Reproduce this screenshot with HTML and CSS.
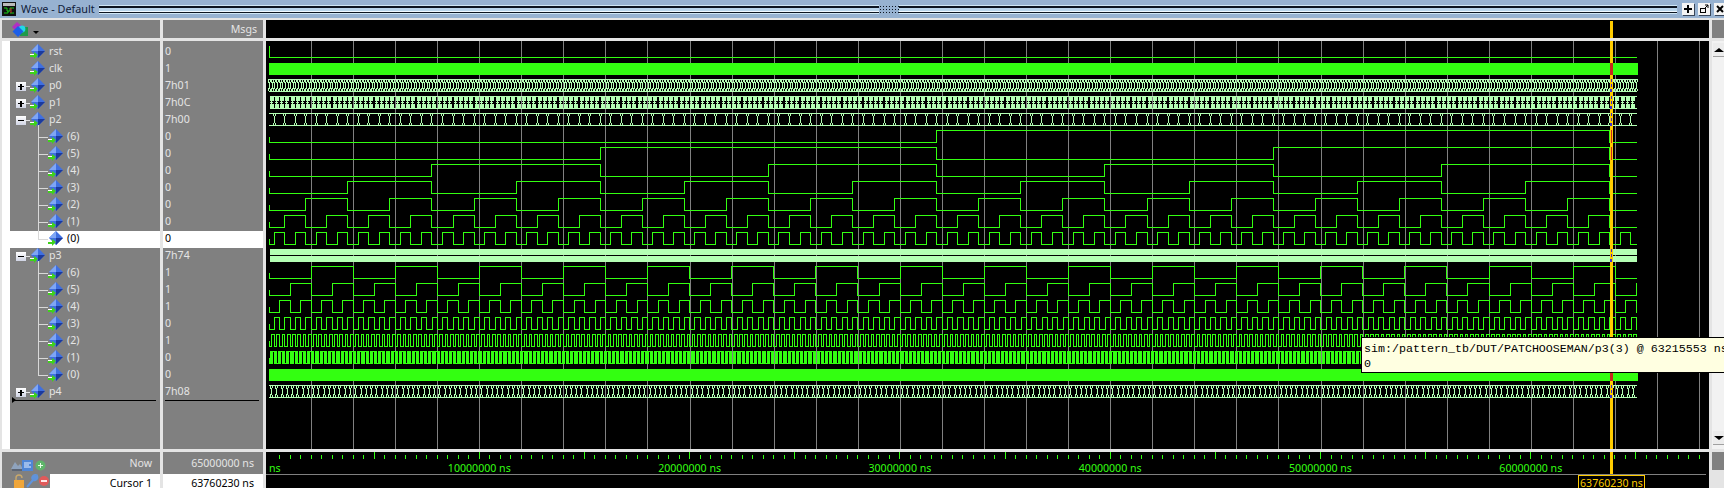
FILE: index.html
```html
<!DOCTYPE html>
<html>
<head>
    <title>Wave - Default</title>
    <link rel="stylesheet" href="styles.css">
</head>
<body>
    <svg class="defs" width="0" height="0">
        <symbol id="sig" viewBox="0 0 15 15">
            <polygon points="8,0 15,7 8,14 1,7" fill="#3f6fe0"/>
            <polygon points="8,0 1,7 8,7" fill="#7fa6f5"/>
            <polygon points="15,7 8,14 8,7" fill="#1c3a9c"/>
            <polygon points="0,10 4,10 4,8 8,11 4,15 4,13 0,13" fill="#3fd21a"/>
            <rect x="0" y="10" width="4" height="1" fill="#fff"/>
        </symbol>
    </svg>

    <div class="titlebar">
        <svg class="app-icon" width="14" height="14" viewBox="0 0 14 14">
            <rect width="14" height="14" fill="#111"/>
            <rect x="1" y="1" width="12" height="3" fill="#bbb"/>
            <path d="M2 6h3v3h3V6h4M2 11h4V9M8 11h4" stroke="#18d018" fill="none"/>
            <path d="M9 6v5" stroke="#d03030" fill="none"/>
        </svg>
        <span class="title-text">Wave - Default</span>
        <div class="grip"><div class="grip-knob"></div></div>
        <div class="title-btns">
            <div class="title-btn">
                <svg width="12" height="12" viewBox="0 0 12 12"><path d="M6 2v8M2 6h8" stroke="#000" stroke-width="2"/></svg>
            </div>
            <div class="title-btn">
                <svg width="12" height="12" viewBox="0 0 12 12"><rect x="2.5" y="5.5" width="5" height="4" fill="none" stroke="#000"/><path d="M6 6l4-4M7 2h3v3" stroke="#000" fill="none"/></svg>
            </div>
            <div class="title-btn">
                <svg width="12" height="12" viewBox="0 0 12 12"><path d="M3 3l6 6M9 3l-6 6" stroke="#000" stroke-width="2"/></svg>
            </div>
        </div>
    </div>

    <div class="window">
        <!-- header row -->
        <div class="head head-names">
            <svg class="group-icon" width="17" height="16" viewBox="0 0 17 16">
                <polygon points="5,0 11,5 5,10 0,5" fill="#b22fc0"/>
                <rect x="8" y="5" width="8" height="9" fill="#1f9a4a"/>
                <circle cx="10" cy="7" r="3.4" fill="#22d5e8"/>
                <polygon points="6,4 11.5,9.5 6,15 0.5,9.5" fill="#1d5fe8"/>
            </svg>
            <span class="drop-arrow"></span>
        </div>
        <div class="head head-msgs">Msgs</div>
        <div class="head head-wave"><div class="cursor-head"></div></div>
        <div class="head"></div>

        <!-- signal names -->
        <div class="names">
            <div class="names-in">
                <div class="row"><span class="slot"></span><svg class="ico"><use href="#sig"/></svg><span class="name">rst</span></div>
                <div class="row"><span class="slot"></span><svg class="ico"><use href="#sig"/></svg><span class="name">clk</span></div>
                <div class="row"><span class="slot"><span class="toggle plus"></span></span><svg class="ico"><use href="#sig"/></svg><span class="name">p0</span></div>
                <div class="row"><span class="slot"><span class="toggle plus"></span></span><svg class="ico"><use href="#sig"/></svg><span class="name">p1</span></div>
                <div class="row open"><span class="slot"><span class="toggle"></span></span><svg class="ico"><use href="#sig"/></svg><span class="name">p2</span></div>
                <div class="row"><span class="branch"></span><svg class="ico"><use href="#sig"/></svg><span class="name">(6)</span></div>
                <div class="row"><span class="branch"></span><svg class="ico"><use href="#sig"/></svg><span class="name">(5)</span></div>
                <div class="row"><span class="branch"></span><svg class="ico"><use href="#sig"/></svg><span class="name">(4)</span></div>
                <div class="row"><span class="branch"></span><svg class="ico"><use href="#sig"/></svg><span class="name">(3)</span></div>
                <div class="row"><span class="branch"></span><svg class="ico"><use href="#sig"/></svg><span class="name">(2)</span></div>
                <div class="row"><span class="branch"></span><svg class="ico"><use href="#sig"/></svg><span class="name">(1)</span></div>
                <div class="row selected"><span class="branch last"></span><svg class="ico"><use href="#sig"/></svg><span class="name">(0)</span></div>
                <div class="row open"><span class="slot"><span class="toggle"></span></span><svg class="ico"><use href="#sig"/></svg><span class="name">p3</span></div>
                <div class="row"><span class="branch"></span><svg class="ico"><use href="#sig"/></svg><span class="name">(6)</span></div>
                <div class="row"><span class="branch"></span><svg class="ico"><use href="#sig"/></svg><span class="name">(5)</span></div>
                <div class="row"><span class="branch"></span><svg class="ico"><use href="#sig"/></svg><span class="name">(4)</span></div>
                <div class="row"><span class="branch"></span><svg class="ico"><use href="#sig"/></svg><span class="name">(3)</span></div>
                <div class="row"><span class="branch"></span><svg class="ico"><use href="#sig"/></svg><span class="name">(2)</span></div>
                <div class="row"><span class="branch"></span><svg class="ico"><use href="#sig"/></svg><span class="name">(1)</span></div>
                <div class="row"><span class="branch last"></span><svg class="ico"><use href="#sig"/></svg><span class="name">(0)</span></div>
                <div class="row"><span class="slot"><span class="toggle plus"></span></span><svg class="ico"><use href="#sig"/></svg><span class="name">p4</span></div>
                <div class="endline names-end"></div>
            </div>
        </div>

        <!-- signal values -->
        <div class="values">
            <div class="val">0</div>
            <div class="val">1</div>
            <div class="val">7h01</div>
            <div class="val">7h0C</div>
            <div class="val">7h00</div>
            <div class="val">0</div>
            <div class="val">0</div>
            <div class="val">0</div>
            <div class="val">0</div>
            <div class="val">0</div>
            <div class="val">0</div>
            <div class="val selected">0</div>
            <div class="val">7h74</div>
            <div class="val">1</div>
            <div class="val">1</div>
            <div class="val">1</div>
            <div class="val">0</div>
            <div class="val">1</div>
            <div class="val">0</div>
            <div class="val">0</div>
            <div class="val">7h08</div>
            <div class="endline values-end"></div>
        </div>

        <!-- drawn by wave.js -->
        <svg id="wave" class="wave" width="1443" height="408" viewBox="266 41 1443 408"></svg>

        <div class="scrollbar">
            <div class="scroll-btn"><span class="arrow-up"></span></div>
            <div class="scroll-btn"><span class="arrow-down"></span></div>
        </div>

        <!-- footer -->
        <div class="foot">
            <div class="foot-row">
                <span class="foot-icons">
                    <svg width="36" height="13" viewBox="0 0 36 13">
                        <path d="M0 10l4-7 3 4 2-2 3 5z" fill="#8fa3bd"/>
                        <path d="M1 11h10" stroke="#3b4a66"/>
                        <rect x="11" y="1" width="11" height="11" fill="#4f86d6"/>
                        <path d="M13 4h7M13 6h5M13 8h7" stroke="#e8f0ff"/>
                        <circle cx="29.5" cy="6.5" r="5" fill="#5fb56a"/>
                        <path d="M27 6.5h5M29.5 4v5" stroke="#e8ffe8"/>
                    </svg>
                </span>
                <span class="foot-label">Now</span>
            </div>
            <div class="foot-row cursor-row">
                <span class="foot-icons tools">
                    <svg width="37" height="14" viewBox="0 0 37 14">
                        <path d="M3 6V4a3 3 0 0 1 6 0" fill="none" stroke="#c9a86a" stroke-width="1.4"/>
                        <rect x="1" y="6" width="10" height="8" fill="#f0a63a"/>
                        <path d="M14 13l6-7M20 6a3 3 0 0 1 2-5l-1 2 2 1 1-2a3 3 0 0 1-4 4" stroke="#5f93dc" stroke-width="2" fill="#5f93dc"/>
                        <circle cx="31" cy="7" r="5" fill="#e05a5a"/>
                        <path d="M28 7h6" stroke="#ffe8e8" stroke-width="2"/>
                    </svg>
                </span>
                <span class="foot-cell">Cursor 1</span>
            </div>
        </div>
        <div class="foot">
            <div class="foot-row"><span class="foot-time">65000000 ns</span></div>
            <div class="foot-row cursor-row"><span class="foot-cell foot-time">63760230 ns</span></div>
        </div>
        <svg id="scale" class="scale" width="1443" height="36" viewBox="266 452 1443 36"></svg>
        <div class="head"></div>
    </div>

    <div class="tooltip">
        <div>sim:/pattern_tb/DUT/PATCHOOSEMAN/p3(3) @ 63215553 ns</div>
        <div>0</div>
    </div>

    <script src="wave.js"></script>
</body>
</html>
```

FILE: styles.css
```css
body {
    margin: 0;
    width: 1724px;
    height: 488px;
    overflow: hidden;
    position: relative;
    background-color: #e4e4e4;
    font-family: "Noto Sans", sans-serif;
    font-size: 10.6px;
}
.defs {
    position: absolute;
}

/* title bar */
.titlebar {
    display: flex;
    align-items: flex-start;
    height: 18px;
    background-color: #97b2d1;
}
.app-icon {
    flex: none;
    margin: 2px 0 0 2px;
}
.title-text {
    flex: none;
    margin-left: 5px;
    width: 78px;
    line-height: 17px;
    font-size: 10.8px;
    white-space: nowrap;
    color: #10203a;
}
.grip {
    flex: none;
    position: relative;
    width: 1578px;
    height: 9px;
    margin-top: 5px;
    background: linear-gradient(#cfe6f5 0 1px, #0c1420 1px 3px, #b9d4ea 3px 6px, #f0f8ff 6px 7px, #0c1420 7px 8px, #cfe6f5 8px 9px);
}
.grip-knob {
    position: absolute;
    left: 780px;
    top: 0;
    width: 20px;
    height: 9px;
    background-color: #97b2d1;
    background-image: radial-gradient(circle, #0c1420 0 1px, transparent 1px);
    background-size: 3px 3px;
}
.title-btns {
    display: flex;
    gap: 4px;
    margin: 3px 0 0 5px;
}
.title-btn {
    flex: none;
    width: 12px;
    height: 12px;
    background-color: #f4f4f4;
    box-shadow: 1px 1px 0 #3a4658;
}

/* panes */
.window {
    display: grid;
    grid-template-columns: 158px 100px 1443px 12px;
    grid-template-rows: 18px 408px 36px;
    gap: 3px;
    padding: 2px 0 0 2px;
}
.head {
    height: 18px;
    background-color: #808080;
}
.head-names {
    display: flex;
    align-items: flex-start;
}
.group-icon {
    margin: 2px 0 0 10px;
}
.drop-arrow {
    margin: 11px 0 0 4px;
    border-left: 3px solid transparent;
    border-right: 3px solid transparent;
    border-top: 3px solid #000;
}
.head-msgs {
    padding-right: 6px;
    text-align: right;
    line-height: 18px;
    color: #e4e4e4;
}
.head-wave {
    position: relative;
    background-color: #000;
}
.cursor-head {
    position: absolute;
    left: 1344px;
    top: 1px;
    width: 3px;
    height: 17px;
    background-color: #ffcc00;
}

/* signal names */
.names {
    padding-left: 8px;
    background-color: #fff;
}
.names-in {
    height: 405px;
    padding-top: 3px;
    background-color: #808080;
}
.row {
    position: relative;
    display: flex;
    align-items: flex-start;
    height: 17px;
    color: #e4e4e4;
    line-height: 15px;
}
.selected {
    background-color: #fff;
    color: #000;
}
.slot {
    flex: none;
    width: 20px;
    height: 15px;
}
.ico {
    flex: none;
    width: 15px;
    height: 15px;
}
.name {
    margin-left: 4px;
}
.toggle {
    display: block;
    position: relative;
    width: 10px;
    height: 9px;
    margin: 4px 0 0 6px;
    background:
        linear-gradient(#000, #000) center / 6px 1px no-repeat,
        linear-gradient(#ffffff, #d0d4e4);
}
.toggle.plus {
    background:
        linear-gradient(#000, #000) center / 6px 1px no-repeat,
        linear-gradient(#000, #000) center / 2px 6px no-repeat,
        linear-gradient(#ffffff, #d0d4e4);
}
.toggle::after {
    content: "";
    position: absolute;
    left: 10px;
    top: 4px;
    width: 4px;
    height: 1px;
    background-color: #e4e4e4;
}
.open::after {
    content: "";
    position: absolute;
    left: 28px;
    top: 13px;
    width: 1px;
    height: 4px;
    background-color: #d8d8d8;
}
.branch {
    flex: none;
    box-sizing: border-box;
    width: 10px;
    height: 17px;
    margin-left: 28px;
    border-left: 1px solid #d8d8d8;
    background: linear-gradient(#d8d8d8, #d8d8d8) 0 8px / 100% 1px no-repeat;
}
.branch.last {
    height: 9px;
}
.endline {
    height: 1px;
    margin-top: -1px;
    background-color: #000;
}
.names-end {
    position: relative;
    margin: -1px 4px 0;
}
.names-end::before {
    content: "";
    position: absolute;
    left: -2px;
    top: -3px;
    border-left: 4px solid #000;
    border-top: 3px solid transparent;
    border-bottom: 3px solid transparent;
}

/* signal values */
.values {
    padding-top: 3px;
    background-color: #808080;
}
.val {
    height: 17px;
    padding-left: 2px;
    line-height: 15px;
    color: #e4e4e4;
}
.val.selected {
    color: #000;
}
.values-end {
    margin: -1px 4px 0 2px;
}

/* waveform */
.wave, .scale {
    display: block;
    background-color: #000;
}
.scale text {
    font-family: "Noto Sans", sans-serif;
    font-size: 10.6px;
    fill: #33ff11;
}
.scale .cursor-text {
    fill: #ffcc00;
}

/* scrollbar */
.scrollbar {
    display: flex;
    flex-direction: column;
    justify-content: space-between;
    padding: 2px 0 4px 1px;
    background-color: #f2f2f2;
}
.scroll-btn {
    display: flex;
    align-items: center;
    justify-content: center;
    height: 13px;
    background-color: #ececec;
    border-bottom: 1px solid #a0a0a0;
}
.arrow-up {
    border-left: 5px solid transparent;
    border-right: 5px solid transparent;
    border-bottom: 4px solid #000;
}
.arrow-down {
    border-left: 5px solid transparent;
    border-right: 5px solid transparent;
    border-top: 4px solid #000;
}

/* footer */
.foot {
    height: 36px;
    background-color: #808080;
}
.foot-row {
    display: flex;
    height: 22px;
    line-height: 22px;
    color: #e4e4e4;
}
.foot-icons {
    flex: none;
    width: 48px;
    padding: 5px 0 0 9px;
    box-sizing: border-box;
}
.foot-label {
    flex: 1;
    padding-right: 8px;
    text-align: right;
}
.cursor-row {
    height: 14px;
    line-height: 10px;
    color: #000;
}
.tools {
    padding: 0 0 0 11px;
}
.foot-cell {
    flex: 1;
    padding: 4px 8px 0 0;
    text-align: right;
    background-color: #fff;
}
.foot-time {
    flex: 1;
    padding-right: 9px;
    text-align: right;
}

/* tooltip over the wave pane */
.tooltip {
    position: absolute;
    left: 1361px;
    top: 337px;
    right: 0;
    box-sizing: border-box;
    height: 36px;
    padding: 4px 0 0 2px;
    overflow: hidden;
    background-color: #ffffe1;
    border: 1px solid #000;
    border-right: none;
    font-family: "Liberation Mono", monospace;
    font-size: 11.67px;
    line-height: 15px;
    white-space: nowrap;
    color: #000;
}
```

FILE: wave.js
```js
var NS = "http://www.w3.org/2000/svg";
var GREEN = "#33ff11";
var PALE = "#b4ffb4";
var X0 = 269;       // time 0
var X1 = 1637;      // end of simulation
var UNIT = 10.515;  // 500000 ns in pixels

function add(svg, tag, attrs, text) {
    var el = document.createElementNS(NS, tag);
    for (var k in attrs) el.setAttribute(k, attrs[k]);
    if (text) el.textContent = text;
    svg.appendChild(el);
    return el;
}

function line(svg, d, color) {
    add(svg, "path", { d: d, stroke: color, fill: "none", "shape-rendering": "crispEdges" });
}

function snap(x) {
    return Math.floor(x) + 0.5;
}

// one bit, toggling on a list of times
function bit(svg, row, times, stub) {
    var lo = 57.5 + 17 * row, hi = lo - 12;
    var d = "M" + X0 + " " + (lo - stub) + "V" + lo;
    var level = 0;
    times.forEach(function (t) {
        var x = snap(t);
        d += "H" + x + "V" + (level ? lo : hi);
        level = 1 - level;
    });
    d += "H" + X1;
    line(svg, d, GREEN);
}

// a bus with an X at every change of value
function bus(svg, row, cell, start, w) {
    var top = 45.5 + 17 * row, bot = top + 12;
    var d = "M" + X0 + " " + top + "H" + X1 + "M" + X0 + " " + bot + "H" + X1;
    for (var t = X0 + start; t < X1; t += cell) {
        var x = snap(t);
        d += "M" + (x - w) + " " + top + "L" + (x + w) + " " + bot;
        d += "M" + (x + w) + " " + top + "L" + (x - w) + " " + bot;
    }
    line(svg, d, PALE);
}

// same, but the two sides meet in one wall, so the cells look like rings
function ringBus(svg, row, cell, start, w) {
    var top = 45.5 + 17 * row, bot = top + 12;
    var d = "M" + X0 + " " + top + "H" + X1 + "M" + X0 + " " + bot + "H" + X1;
    for (var t = X0 + start; t < X1; t += cell) {
        var x = snap(t);
        d += "M" + (x - w) + " " + top + "L" + x + " " + (top + 3) + "V" + (bot - 3) + "L" + (x - w) + " " + bot;
        d += "M" + (x + w) + " " + top + "L" + x + " " + (top + 3) + "M" + x + " " + (bot - 3) + "L" + (x + w) + " " + bot;
    }
    line(svg, d, PALE);
}

// p1 changes faster than the pixels can show
function denseBus(svg, row) {
    var top = 45 + 17 * row;
    rect(svg, X0 + 1, top, X1 - X0 - 1, 1, PALE);
    rect(svg, X0 + 1, top + 12, X1 - X0 - 1, 1, PALE);
    for (var t = X0 + 1; t < X1 - 1; t += UNIT / 2) {
        var x = Math.floor(t);
        rect(svg, x, top, 4, 5, PALE);
        rect(svg, x + 1, top + 5, 1, 3, PALE);
        rect(svg, x, top + 6, 3, 1, PALE);
        rect(svg, x, top + 8, 4, 5, PALE);
    }
}

function rect(svg, x, y, w, h, color) {
    add(svg, "rect", { x: x, y: y, width: w, height: h, fill: color });
}

// toggles of a counter bit: half period, first change
function toggles(half, first, stopAt) {
    var list = [];
    for (var t = X0 + first; t < stopAt; t += half) list.push(t);
    return list;
}

function drawWave() {
    var svg = document.getElementById("wave");
    var i, k;

    // grid
    for (k = 1; k <= 34; k++) {
        var gx = snap(X0 + 0.3 + 42.07 * k);
        line(svg, "M" + gx + " 41V449", "#808080");
    }

    // rst, clk
    bit(svg, 0, [], 12);
    rect(svg, X0, 63, X1 + 1 - X0, 12, GREEN);

    bus(svg, 2, UNIT / 4, 0.6, 1);
    denseBus(svg, 3);
    ringBus(svg, 4, UNIT, UNIT / 2, 2);

    // p2 is a counter that wraps at 128 just before the cursor
    var wrap = X0 - UNIT / 2 + 128 * UNIT;
    for (i = 6; i >= 0; i--) {
        var half = UNIT * Math.pow(2, i);
        var list = toggles(half, half - UNIT / 2, wrap + 1);
        if (i === 0) list = toggles(UNIT, UNIT / 2, X1);
        bit(svg, 5 + (6 - i), list, 6);
    }

    // p3 bus is too dense to show single cells
    rect(svg, X0 + 1, 249, X1 - X0 - 1, 6, PALE);
    rect(svg, X0 + 1, 256, X1 - X0 - 1, 6, PALE);

    // p3 bits, the lowest one is a solid band
    for (i = 6; i >= 1; i--) {
        var h = 42.07 / Math.pow(2, 6 - i);
        bit(svg, 13 + (6 - i), toggles(h, h, X1), 6);
    }
    rect(svg, X0, 369, X1 + 1 - X0, 12, GREEN);

    bus(svg, 20, UNIT / 2, UNIT / 4, 1);

    // cursor
    rect(svg, 1610, 41, 3, 408, "#ffcc00");
    rect(svg, 1610, 63, 3, 12, "#c8281e");
    rect(svg, 1610, 369, 3, 12, "#c8281e");
    [79, 96, 113, 249, 385].forEach(function (y) {
        rect(svg, 1611, y, 1, 3, "#3a2fd0");
        rect(svg, 1611, y + 5, 1, 3, "#3a2fd0");
        rect(svg, 1610, y + 10, 2, 3, "#3a2fd0");
    });
    rect(svg, 1611, 130, 1, 13, "#c8281e");
    rect(svg, 1611, 147, 1, 13, "#c8281e");
}

function drawScale() {
    var svg = document.getElementById("scale");
    for (var k = 1; k * UNIT + X0 < 1709; k++) {
        var x = snap(X0 + k * UNIT);
        line(svg, "M" + x + (k % 10 === 0 ? " 452" : " 455") + "V459", GREEN);
    }
    add(svg, "text", { x: X0, y: 472 }, "ns");
    for (var n = 1; n <= 6; n++) {
        add(svg, "text", { x: X0 + n * UNIT * 20, y: 472, "text-anchor": "middle" }, n + "0000000 ns");
    }
    line(svg, "M266 474.5H1706", "#808080");
    rect(svg, 1610, 452, 3, 22, "#ffcc00");
    add(svg, "rect", { x: 1578.5, y: 475.5, width: 66, height: 20, fill: "#000", stroke: "#ffcc00" });
    add(svg, "text", { x: 1611.5, y: 487, "text-anchor": "middle", "class": "cursor-text" }, "63760230 ns");
}

drawWave();
drawScale();
```
